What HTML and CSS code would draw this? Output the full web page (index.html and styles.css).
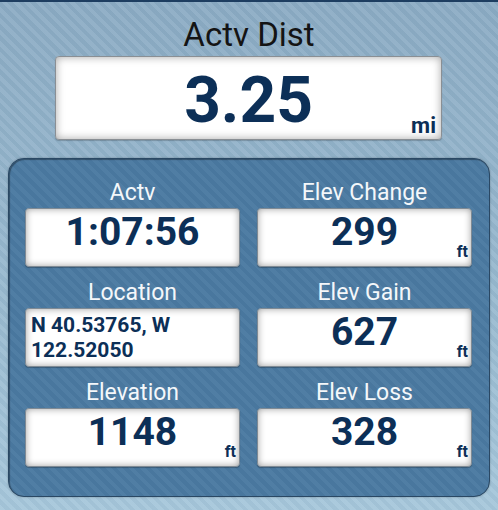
FILE: index.html
```html
<!DOCTYPE html>
<html>
<head>
<meta charset="utf-8">
<link rel="stylesheet" href="styles.css">
</head>
<body>
<div class="screen">
  <div class="topline"></div>
  <div class="title">Actv Dist</div>
  <div class="bigbox">
    <div class="bigval">3.25</div>
    <span class="unit big-unit">mi</span>
  </div>
  <div class="panel">
    <div class="cell">
      <div class="label">Actv</div>
      <div class="box"><div class="val">1:07:56</div></div>
    </div>
    <div class="cell">
      <div class="label">Elev Change</div>
      <div class="box"><div class="val">299</div><span class="unit">ft</span></div>
    </div>
    <div class="cell">
      <div class="label">Location</div>
      <div class="box"><div class="loc">N 40.53765, W<br>122.52050</div></div>
    </div>
    <div class="cell">
      <div class="label">Elev Gain</div>
      <div class="box"><div class="val">627</div><span class="unit">ft</span></div>
    </div>
    <div class="cell">
      <div class="label">Elevation</div>
      <div class="box"><div class="val">1148</div><span class="unit">ft</span></div>
    </div>
    <div class="cell">
      <div class="label">Elev Loss</div>
      <div class="box"><div class="val">328</div><span class="unit">ft</span></div>
    </div>
  </div>
</div>
</body>
</html>
```
FILE: styles.css
```css
html, body {
  margin: 0;
  padding: 0;
}
body {
  width: 498px;
  height: 510px;
  overflow: hidden;
  font-family: Roboto, "Liberation Sans", sans-serif;
}
.screen {
  width: 498px;
  height: 510px;
  background:
    repeating-linear-gradient(45deg, rgba(255,255,255,0.07) 0 4px, rgba(0,0,0,0.02) 4px 8px),
    linear-gradient(180deg, #8aaac3 0%, #98b9cf 60%, #a5c6da 100%);
  overflow: hidden;
}
.topline {
  height: 2px;
  background: #1d3d60;
}
.title {
  margin-top: 14px;
  height: 38px;
  line-height: 38px;
  font-size: 33px;
  text-align: center;
  color: #141414;
}
.bigbox {
  position: relative;
  box-sizing: border-box;
  margin: 2px 56px 0 55px;
  height: 84px;
  padding-top: 12px;
  background: #fff;
  border: 1px solid #8a8f94;
  border-radius: 4px;
  box-shadow: inset 0 0 8px rgba(0,0,0,0.35), 0 1px 1px rgba(0,0,0,0.2);
  text-align: center;
}
.bigval {
  font-size: 64px;
  line-height: 64px;
  font-weight: 700;
  color: #0c2f57;
}
.unit {
  position: absolute;
  right: 3px;
  bottom: 6px;
  font-size: 16px;
  line-height: 16px;
  font-weight: 700;
  color: #0c2f57;
}
.big-unit {
  right: 5px;
  bottom: 2px;
  font-size: 22px;
  line-height: 22px;
}
.panel {
  box-sizing: border-box;
  margin: 18px 0 0 8px;
  width: 482px;
  height: 339px;
  padding: 19px 16px 0 16px;
  border: 1px solid #2a4864;
  border-radius: 16px;
  background:
    repeating-linear-gradient(45deg, rgba(255,255,255,0.035) 0 4px, rgba(0,0,0,0.02) 4px 8px),
    #4a79a1;
  box-shadow: inset 1px 1px 1px rgba(0,0,0,0.35), 0 0 2px rgba(0,0,0,0.3);
  display: grid;
  grid-template-columns: 215px 215px;
  column-gap: 17px;
  row-gap: 11px;
  align-content: start;
}
.label {
  height: 30px;
  line-height: 30px;
  font-size: 23px;
  text-align: center;
  color: #f4f7fa;
}
.box {
  position: relative;
  box-sizing: border-box;
  height: 59px;
  padding-top: 1px;
  background: #fff;
  border: 1px solid #7f8a94;
  border-radius: 4px;
  box-shadow: inset 0 0 7px rgba(0,0,0,0.38), 0 1px 1px rgba(0,0,0,0.25);
  text-align: center;
}
.val {
  font-size: 39px;
  line-height: 44px;
  font-weight: 700;
  color: #0c2f57;
}
.loc {
  text-align: left;
  padding: 3px 0 0 5px;
  font-size: 21px;
  line-height: 25px;
  font-weight: 700;
  color: #0c2f57;
}
```
